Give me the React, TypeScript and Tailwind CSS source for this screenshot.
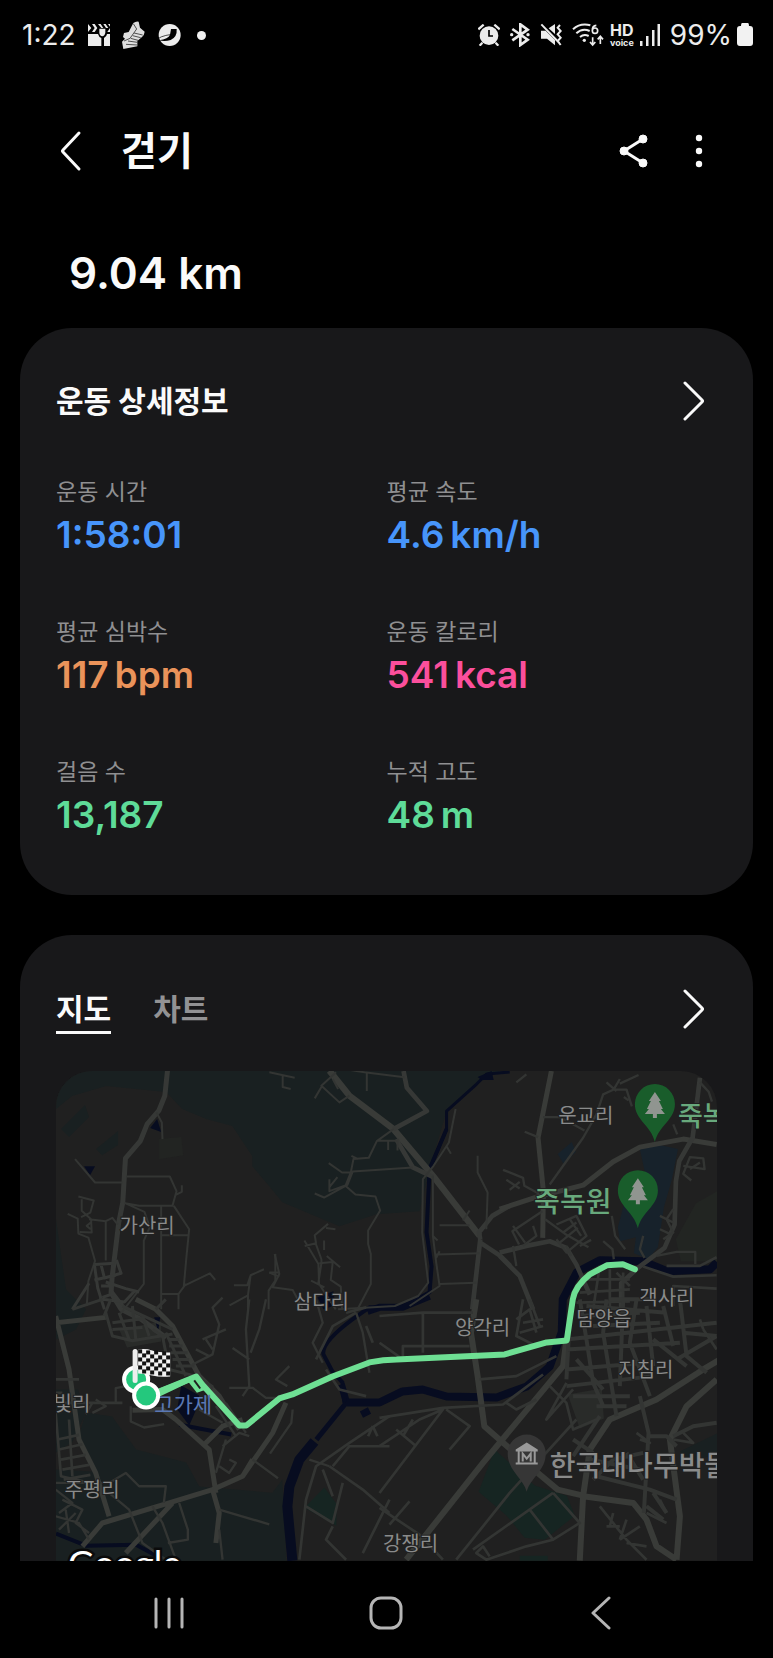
import type { ReactNode } from 'react';

interface Stat {
  label: string;
  value: string;
  unit?: string;
  color: string;
}

const STATS: Stat[] = [
  { label: '운동 시간', value: '1:58:01', color: 'text-[#4795fa]' },
  { label: '평균 속도', value: '4.6', unit: 'km/h', color: 'text-[#4795fa]' },
  { label: '평균 심박수', value: '117', unit: 'bpm', color: 'text-[#ea935a]' },
  { label: '운동 칼로리', value: '541', unit: 'kcal', color: 'text-[#fb4f9c]' },
  { label: '걸음 수', value: '13,187', color: 'text-[#5edb98]' },
  { label: '누적 고도', value: '48', unit: 'm', color: 'text-[#5edb98]' },
];

const PLACES = [
  { name: '가산리', x: 148, y: 1234 },
  { name: '삼다리', x: 322, y: 1310 },
  { name: '운교리', x: 586, y: 1124 },
  { name: '객사리', x: 667, y: 1306 },
  { name: '양각리', x: 483, y: 1336 },
  { name: '담양읍', x: 604, y: 1327 },
  { name: '지침리', x: 646, y: 1378 },
  { name: '빛리', x: 73, y: 1412 },
  { name: '주평리', x: 93, y: 1497 },
  { name: '강쟁리', x: 411, y: 1551 },
];

function ChevronRight() {
  return (
    <svg width="24" height="44" viewBox="0 0 24 44" fill="none" stroke="#fafafa" strokeWidth="3" strokeLinecap="round" strokeLinejoin="round" aria-hidden="true">
      <path d="M4 4 21 21q1 1 0 2L4 40" />
    </svg>
  );
}

function StatusBar() {
  return (
    <div className="flex h-[70px] items-center justify-between pr-5 pl-[22px] text-[28px] text-[#ececec]">
      <div className="flex items-center gap-3">
        <span>1:22</span>
        <svg width="22" height="22" viewBox="0 0 66 66" fill="#ececec" aria-hidden="true">
          <path d="M0 0 10 12 0 24ZM12 0h8l8 12-8 12H12l8-12ZM30 0h8l8 12H40ZM46 0h7l8 12H54ZM60 0h6v8ZM66 12v12h-8ZM0 30h30q3 10 10 12v24H0ZM66 30v36H48V42q8-4 9-12ZM34 14h18v12q-2 10-9 11-8-1-9-11Z" />
        </svg>
        <svg width="23" height="28" viewBox="360 62 69 84" aria-hidden="true">
          <path fill="#dedede" d="M394 68q8-6 16-4l4 18 14 12q-1 10-8 16l-14 12 0 16-42 8-4-22 9-9-6-5 3-12 14-3Z" />
          <path stroke="#333" strokeWidth="2.5" fill="none" d="m394 70 10 16-20 28-18 8M396 98l26 6M392 106l24 6M386 114l22 6M378 122l28 4M372 132l34 2" />
        </svg>
        <svg width="24" height="24" viewBox="460 68 72 72" aria-hidden="true">
          <circle cx="498" cy="104" r="33" fill="#ececec" />
          <path fill="#000" d="M502 86h17q2 24-18 33-18 6-35 1 28-4 33-17Z" />
          <path stroke="#000" strokeWidth="2" fill="none" d="M460 120q4-12 44-18" />
        </svg>
        <span className="ml-1 size-[9px] rounded-full bg-[#f2f2f2]" />
      </div>
      <div className="flex items-center gap-[10px]">
        <svg width="22" height="22" viewBox="53 72 66 66" fill="#ececec" aria-hidden="true">
          <circle cx="86" cy="107" r="28" />
          <path d="m54 88 16-14M118 88l-16-14M66 128l-8 9m48-9 8 9" stroke="#ececec" strokeWidth="7" />
          <path d="M86 90v18h12" stroke="#000" strokeWidth="5" fill="none" />
        </svg>
        <svg width="20" height="24" viewBox="149 70 60 72" fill="none" stroke="#ececec" strokeWidth="8" aria-hidden="true">
          <path d="m156 88 46 32-22 16V74l22 16-46 32" />
          <circle cx="154" cy="105" r="5" fill="#ececec" stroke="none" />
          <circle cx="203" cy="105" r="5" fill="#ececec" stroke="none" />
        </svg>
        <svg width="22" height="24" viewBox="240 70 66 72" aria-hidden="true">
          <path fill="#ececec" d="M243 93h14l28 28v16l-24-20h-18ZM266 86l19-13v30Z" />
          <path stroke="#ececec" strokeWidth="6" fill="none" d="m244 74 54 56m2-54-7 8 9 10-9 10 9 10-9 10 9 12" />
        </svg>
        <svg width="32" height="24" viewBox="336 70 96 72" fill="none" stroke="#ececec" strokeWidth="6" aria-hidden="true">
          <path d="M339 89q22-20 52-12M349 101q18-17 40-7M360 112q12-10 26-3" />
          <circle cx="373" cy="122" r="5" fill="#ececec" stroke="none" />
          <path d="M409 77q-13 1-12 16m0 0a8 8 0 1 0 16 0 8 8 0 1 0-16 0M398 113v22m-8-8 8 9 8-9M421 133v-22m-8 8 8-9 8 9" strokeWidth="5" />
        </svg>
        <span className="-mx-1 flex flex-col items-center pt-px font-bold">
          <span className="text-[16px] leading-[14px]">HD</span>
          <span className="text-[9px] leading-[12px]">voice</span>
        </span>
        <svg width="20" height="22" viewBox="0 0 20 22" fill="#ececec" aria-hidden="true">
          <path d="M0 17h2.5v5H0ZM6 12h2.5v10H6ZM12 6h2.5v16H12ZM17.5 0H20v22h-2.500Z" />
        </svg>
        <span className="flex items-center gap-[5px]">
          99%
          <svg width="16" height="24" viewBox="0 0 16 24" fill="#f2f2f2" aria-hidden="true">
            <path d="M5 0h6q1 0 1 3h1q3 0 3 3v14q0 3-3 3H3q-3 0-3-3V6q0-3 3-3h1q0-3 1-3Z" />
          </svg>
        </span>
      </div>
    </div>
  );
}

function ParkPin({ x, y }: { x: number; y: number }) {
  return (
    <g transform={`translate(${x} ${y})`}>
      <path d="M0 37C-4 20-20 15-20-1a20 20 0 0 1 40 0C20 15 4 20 0 37Z" fill="#195d2b" />
      <path d="M0-13 6-4H4l4 8H6l4 5H2v4h-4V9h-8l4-5h-2l4-8h-2Z" fill="#909590" />
    </g>
  );
}

function RouteMap() {
  const flag: ReactNode[] = [];
  for (let row = 0; row < 6; row++) {
    for (let col = 0; col < 8; col++) {
      if ((row + col) % 2 === 0) {
        flag.push(<rect key={`${row}-${col}`} x={139 + col * 4} y={1350 + row * 4 + Math.round(col / 3)} width="4" height="4" fill="#111" />);
      }
    }
  }

  return (
    <svg viewBox="57 1072 660 489" className="block h-auto w-full rounded-t-[36px]" role="img" aria-label="지도">
      <rect x="57" y="1072" width="660" height="489" fill="#202020" />

      {/* forest and parks */}
      <g fill="#192021">
        <path d="M57 1072H500L477 1085 447 1112 430 1170 420 1212 377 1215 340 1227 283 1203 270 1187 253 1167V1157L233 1127 207 1120 183 1110 167 1093 107 1087 73 1097 57 1110Z" />
        <path d="M62 1130l24-24 4 12-20 20ZM97 1150l22-18 0 14-16 10ZM57 1220l10 70 20 20-10 20-20 10Z" />
        <path d="M87 1413 113 1417 137 1450 187 1463 200 1487 273 1493 283 1480 287 1561H57V1470L93 1472 80 1435ZM57 1390h22l8 23-14 30-16 10Z" />
        <path d="M680 1452l37-18v20l-30 10Z" />
      </g>
      <path d="M676 1240l20-36 21-12v70h-36Z" fill="#222522" />
      <path d="M160 1140l22-2 2 18-24 4Z" fill="#222422" />
      <path d="M640 1150l20-4 18 4-6 30-8 28-6 40-10 12-14-6 2-16-16 4-2-14 8-30 20-20ZM558 1155l14-12 4 10-12 12Z" fill="#17222b" />
      <path d="M495 1450l40 36 32 10 8 20-30 24-20-2-18-22-28-24ZM305 1508l20-20 12 16v22ZM520 1556h28v5h-28Z" fill="#162522" />
      <path d="M568 1395l34-6 2 30-24 10ZM120 1330l42-8v20l-34 6Z" fill="#292b29" />

      {/* river */}
      <g fill="none" stroke="#070c20" strokeLinejoin="round">
        <path d="M510 1073 487 1075 477 1085 447 1112V1130L430 1170" strokeWidth="3" />
        <path d="M447 1130 430 1170 427 1233 432 1267 430 1293 403 1308H370L353 1320Q322 1343 324 1355L333 1372 343 1383 345 1403" strokeWidth="4" />
        <path d="M368 1312 380 1308H403L430 1297M342 1385 347 1403M362 1415l8-4" strokeWidth="7" />
        <path d="M717 1263 710 1270 667 1272 643 1262 600 1261 577 1273 563 1300 562 1333 550 1367 527 1387 497 1398 447 1397 423 1390 403 1392 380 1403 347 1403" strokeWidth="8" />
        <path d="M347 1403 317 1440" strokeWidth="5" />
        <path d="M315 1442 300 1460 290 1487 288 1507 293 1561" strokeWidth="10" />
        <path d="M57 1534l30 12 50-1 22 12M180 1425l20 4 32 6" strokeWidth="4" />
      </g>
      <path d="M151 1129l7-9 4 13ZM85 1167h11l-5 9ZM178 1410l4-24 18 10-3 14-7 16ZM318 1298l16-6 2 14-12 4ZM478 1078l14-6 2 9h-12ZM155 1318l4 14 2-14Z" fill="#070c20" />

      {/* northwest roads */}
      <g transform="translate(40 1060) scale(0.3333)" fill="none" stroke="#333533" strokeWidth="6" strokeLinejoin="round">
        <path d="m385 35-8 75-18 45-35 40-20 50-45 53-8 132-12 60-20 165-3 45 30 50 60 30 75 55" strokeWidth="15" stroke="#363836" />
        <path d="m352 160 16 30 2 50M108 300l60 70h82M262 352h130l20 44-12 44H300l-42-8 58 26 16 46-18 40v130l-70 90M404 440l46 70-8 80-8 90 78-38 16 20M450 528H366M366 440v310M366 704h52v46M418 704l22-30M428 378v20l-20 10" />
        <path d="m86 464 30 14 2 45 30 12 20 70-20 60-5 75M118 412l46 12-10 36-28 14M128 420v35l28 25 2 40-36-2M150 480l50 6 20-10 16 20M200 484v120M155 490l-12 10 12 10" />
        <path d="m166 616 60-4m-60 4 10 70 20 64m-10-134 10 40 50-14-14-40m-66 60 64-14m-50 70 76 10 30-32M150 672l-50 78m86-70 28 0 6 24-30 10m30-16 40 52m-60-82 60 20 40 10" strokeWidth="9" stroke="#363836" />
        <path d="M584 678h40l10-30 40-18M634 648l-8 60-55 30m55-30v42M708 584v80l-20 30v56M690 640l30 12" />
      </g>

      {/* north centre roads */}
      <g transform="translate(270 1060) scale(0.3333)" fill="none" stroke="#333533" strokeWidth="6" strokeLinejoin="round">
        <path d="m180 35 60 75 130 98 120 142 140 180" strokeWidth="19" stroke="#393b38" />
        <path d="m380 240 50 85 60 28M372 210l100-54-60-70-10-50M632 540l-24 210M632 540l-4-20 40-50 52-30M632 550l60 40 30 30" strokeWidth="14" stroke="#363836" />
        <path d="m405 55-120-15-60-10M292 38v58M200 40l-44 40 54 50 30-20M156 84l-20 34M0 40l76 16M40 50v34l24 6M190 60l16 30M372 210l-50 36-24 50-46 4-8 40-16 40 30 26 60 6 14 42-36 60v40l8 30v90l-42 80M430 325l-180 12-16 40-70 38-28-12M178 312l40 28h26M180 360v36l50-18M180 384l24-30M325 245l58 0M356 245v28M384 240v34M246 290l20 10" />
        <path d="m558 150-20 100-46 70-32 40-2 160 18 150-30 40-70 30-170 10M490 350v180l10 80 10 70-90 60M510 498h90M500 586l130-4M510 674l110-4M624 290v50l30 60-4 110M530 260l14 24M600 454l-20 30M490 530l14 14M510 576l-10 20" />
        <path d="M176 494l-40 34 4 24-34 8M170 506l28 4M105 544l42 70 2 60 50 76M138 550l18 50v12l-10 64M164 544v28M150 612l40-4-6 54 30 20 4 68M172 590l40 34M16 584l14 60-20 40 60 8 30 56M0 640h28M125 664l40 20" />
      </g>

      {/* northeast roads */}
      <g transform="translate(500 1060) scale(0.3333)" fill="none" stroke="#333533" strokeWidth="7" strokeLinejoin="round">
        <path d="m155 36-40 200 16 160-2 140M0 450l110-36 140-36 90-70 80-44 130-24 100 16" strokeWidth="15" stroke="#393b38" />
        <path d="M600 56l-22 180-40 70-10 60-4 130-30 70-80 60-50 46v78M0 580l80-20 70-14 50 20 30 50 40 90M0 590l60 60 40 100" strokeWidth="14" stroke="#363836" />
        <path d="m50 70 30-24M150 376l100-140 40-70 20-60 30-14 40 0 16 50M340 94l20-34M360 74l56-26M320 70l30 26M386 124l-14-10M130 174h50l74 40M75 218l40 16M520 196l12 30M600 70l26 28 10 30M10 332l60 24 4 24 44 24M20 362l40 26M30 392l30-24M128 456l-90 60 20 40M40 500l36 50M50 620l-10-60M136 480l60 44 70 40M170 496l60-26 30 60-60 50-30-40M190 520l40-30M210 480l34 50M180 550l54-44M200 560l14 30M240 560l34-18M310 546l28 24 4 30M336 470l10 60 30 40M430 530l-10 40 14 26M470 590l60-12h56v36M550 320l64 10-4-32-40-4-20 50 24 20M570 330l30-20M490 540l30-20-20-40 20-30M480 470l40 20M480 510l30 14M100 500l10 30-40 30" />
        <path d="M430 622l90 30 130-4M500 620h100l50-26M520 740l0-60 130 8M250 660l140 0M300 620l-20 130M330 630v120M370 640v110M240 700l150-10M230 730l160-4M350 640l40 40" strokeWidth="8" />
      </g>

      {/* southwest roads */}
      <g transform="translate(40 1300) scale(0.3333)" fill="none" stroke="#333533" strokeWidth="7" strokeLinejoin="round">
        <path d="M290 0l60 30 50 50 80 150 60 60 60 100M50 50l40 160 30 210 50 100 40 130M50 70l150-16M740 310l-40 90-90 130-90 40-130 40-200 60-60 70M520 570l20 70-10 90M640 480l-30 50M530 580l-20-130-100-90-40-30-90 2M400 610l-140 150M490 440l60-60 60-20" strokeWidth="15" stroke="#393b38" />
        <path d="M200 40l20 70 60 14 120-20M240 40l30 80M280 20l10 100M220 70l90-12M220 90l90-6M310 50l20 60M340 90l30 20 20 100 80 20M380 100l60 130M390 120l30 0M390 140l40 0M395 160l50 0M400 180l50 0M410 200l56 0M250 20l150 70M215 0l-20 50M100 30l90-30M350 30l30-30" strokeWidth="9" />
        <path d="M50 240l70 0M50 280l20 0M60 310h190M50 340l16 190 90 20M90 360l10 170M56 420l64-14M60 450l70-16M66 480l74-14M70 510l80-14M74 540l80-14" strokeWidth="8" />
        <path d="M230 310v-44l50-10M275 320v46l40 18 60-10M170 300l30 20-40 20M160 310l-20 34M460 195l60-30 20-90-20-50 30-30M490 120l70-30M470 150l40 20M520 150l-20-30M630 0l-10 90 10 170-20 30M680 0l-20 90-26 70M580 146l50 34M570 265l70 0 40 30 50 0M750 200l-40 40 34 20M830 0l20 70-30 60 30 60M950 40l20 60 20 120M760 330l-4 40-64 92M640 480l76 56M540 630l150 44M870 500l-60-20M540 690l10 90M550 440l50-40 30 10M560 420l-30 100M540 500l30 20 20-30-20-10M470 230l50 30-20 40M480 330l70 40M530 320l60 90M560 310l60 90" />
        <path d="M50 550h160l50-30 40 40 80 0-6 50M50 570l50 40-40 30M70 600l60 30-20 40 40 30M50 650l70 20 30 50M60 690l50-50M80 630l10 70M210 580l60 50 40 100 70 50M340 620l30 50 40 110M420 610l26 80v30l-60 10" />
        <path d="M1050 350l-120 80-100 70-30 100-20 180M870 500l100 70 80 70M850 510l30 80M1050 440h-120l-50 60M800 620l80 50 30-120M880 680l-20 40 60 60M1050 600l-80 160M950 40l-70 40-50 100M980 80l20 50M1000 380l-14 30M1000 380l14 30M860 210l40 60 80 20M920 40l60-16" strokeWidth="8" />
      </g>

      {/* southeast roads */}
      <g transform="translate(380 1300) scale(0.3333)" fill="none" stroke="#333533" strokeWidth="8" strokeLinejoin="round">
        <path d="M290 0l-16 100 20 130 20 150 160 140 60 50 76 18-10 195M80 780l230-290 240-290 10-80M610 590l150 20 40 50 30 80 60 40M610 590l20-140 60-90 140-60 140-90 50-30M1010 240l-90 80-50 100 30 230-10 130" strokeWidth="18" stroke="#393b38" />
        <path d="M600 0l20 120 20 130 30 70M680 0l-10 100 40 250M770 0l-20 130 60 160M560 120l450-50M560 150l340-20M560 210l240-20M560 260l260-30M580 290l170 0M900 0l20 170 60 50M890 180l120-70M910 100l100 10M820 120l100 80M690 0l140 0M600 50l180-10M640 80l200-10M620 20l240 20M730 0l-10 260M800 20l20 180M850 20l30 120M570 60l-10 180M590 180l80 90M650 320l90 0M660 350l-80 120M780 290l26 110-14 240M800 410h60l30 30M880 410l60-30 70-10M640 540l60-60 90-20M650 530l160 40 80 30M580 420l60 40M630 480l150 30M790 540l-50-80M820 580l40 60M800 620l50 40" strokeWidth="12" />
        <path d="M430 0l-20 110 60 30M410 60l40-30 20 70M450 0l30 80M430 70l60-10M420 100l70-20M0 130l70 50v-40h200M0 50l130-10v120M300 240l110-10 120-60M130 40h150M0 355l190-30 180-10 120-90M0 440l120-80 70-30-190 250M200 330l70 50-60 70M50 390l60 50M70 410l30-50M380 310l30 20 60-30M560 250l-60 110 80-90M510 260l50 50 20 80 70-30M590 360l-200 220-160 200M520 580l-240 170M450 630l70 90-80 20-120 40-30-20 20-20 20 30M520 580l80 90-80 50M0 625l120 80 70 75M90 605l-60 70M1010 150l-40-60M960 60l10 30M880 420l60 10-30-30M770 400l40 30-30-10M660 620l80 100 60 60M700 640l-10 40M740 660l-20 60M680 680l40 0M720 720l60-40M740 730l60 10M840 600l20 40M800 640l60 30" />
      </g>

      {/* walked route */}
      <path d="M635 1270 623 1265 607 1266 590 1275Q575 1287 573 1300L567 1341 547 1343 505 1355 397 1360Q384 1360 370 1363L333 1377 293 1395 280 1399 247 1426H240L203 1385 197 1377 160 1392" fill="none" stroke="#6edf93" strokeWidth="6" strokeLinejoin="round" strokeLinecap="round" />
      <path d="M158 1397 190 1382 198 1392 204 1390 194 1377 158 1391Z" fill="#6edf93" stroke="#6edf93" strokeWidth="2" />
      <path d="M195 1381l6 8" stroke="#202020" strokeWidth="2" />

      <g fontFamily="'Noto Sans CJK KR', sans-serif" fill="#8a8b8b" stroke="#202020" strokeWidth="2" paintOrder="stroke">
        {PLACES.map(p => (
          <text key={p.name} x={p.x} y={p.y} fontSize="20" textAnchor="middle">{p.name}</text>
        ))}
        <text x="184" y="1413" fontSize="21" textAnchor="middle" fill="#5a78b5" stroke="none">고가제</text>
        <text x="550" y="1476" fontSize="28" fontWeight="500">한국대나무박물관</text>
        <g fill="#68a97c" fontWeight="500">
          <text x="573" y="1213" fontSize="28" textAnchor="middle">죽녹원</text>
          <text x="678" y="1127" fontSize="27">죽녹원</text>
        </g>
      </g>
      <ParkPin x={655} y={1106} />
      <ParkPin x={638} y={1192} />

      <path d="M527 1492C523 1478 508 1471 508 1454a19 19 0 0 1 38 0C546 1471 531 1478 527 1492Z" fill="#363636" />
      <path d="M527 1443l11 7v2h-22v-2ZM518 1452h2v11h-2ZM534 1452h2v11h-2ZM516 1463h22v2h-22Z" fill="#999" />
      <path d="M523 1462v-8l4 5 4-5v8" fill="none" stroke="#999" strokeWidth="2" />

      {/* start marker, finish marker and flag */}
      <circle cx="137" cy="1380" r="12" fill="#24c87d" stroke="#fff" strokeWidth="4" />
      <path d="M139 1350q8-1 14 1t18 2v24q-10 1-18-1t-14-2Z" fill="#f3f3f3" />
      {flag}
      <path d="M136 1352v29" stroke="#eee" strokeWidth="5" strokeLinecap="round" />
      <circle cx="147" cy="1396" r="12" fill="#24c87d" stroke="#fff" strokeWidth="4" />

      <text x="69" y="1577" fontFamily="Lato, sans-serif" fontSize="36" fill="#fff" stroke="#0b0b0b" strokeWidth="5" paintOrder="stroke">Google</text>
    </svg>
  );
}

export default function App() {
  return (
    <div className="flex min-h-screen flex-col bg-black font-['Inter','Noto_Sans_CJK_KR',sans-serif] text-[#fafafa]">
      <StatusBar />

      <header className="flex h-40 items-center px-[58px] pt-px">
        <button aria-label="뒤로" className="mr-[39px]">
          <svg width="24" height="44" viewBox="0 0 24 44" fill="none" stroke="#fafafa" strokeWidth="3" strokeLinecap="round" strokeLinejoin="round">
            <path d="M21 4 5 21q-1 1 0 2l16 17" />
          </svg>
        </button>
        <h1 className="flex-1 pt-0.5 text-[39px] font-bold">걷기</h1>
        <button aria-label="공유" className="mr-[45px]">
          <svg width="32" height="36" viewBox="0 0 32 36" fill="#fafafa" stroke="#fafafa">
            <path d="M25 6 6 18l19 12" fill="none" strokeWidth="3" />
            <circle cx="25" cy="6" r="4" />
            <circle cx="6" cy="18" r="4" />
            <circle cx="25" cy="30" r="4" />
          </svg>
        </button>
        <button aria-label="더보기" className="mr-3">
          <svg width="8" height="36" viewBox="0 0 8 36" fill="#fafafa">
            <circle cx="4" cy="5" r="3.2" />
            <circle cx="4" cy="18" r="3.2" />
            <circle cx="4" cy="31" r="3.2" />
          </svg>
        </button>
      </header>

      <p className="px-[69px] pt-[10px] pb-[22px] text-[44px] leading-[66px] font-semibold">9.04 km</p>

      <main className="flex flex-1 flex-col gap-10 px-5">
        <section className="rounded-[52px] bg-[#18181a] px-9 pt-[50px] pb-[54px]">
          <div className="flex items-center justify-between">
            <h2 className="text-[30px] leading-[46px] font-bold">운동 상세정보</h2>
            <button aria-label="운동 상세정보 보기" className="mr-3">
              <ChevronRight />
            </button>
          </div>
          <dl className="mt-[51px] grid grid-cols-2 gap-y-[54px]">
            {STATS.map(s => (
              <div key={s.label}>
                <dt className="text-[23px] leading-[34px] text-[#8f8f91]">{s.label}</dt>
                <dd className={`flex gap-[6px] text-[37px] leading-[52px] font-semibold ${s.color}`}>
                  <span>{s.value}</span>
                  {s.unit && <span>{s.unit}</span>}
                </dd>
              </div>
            ))}
          </dl>
        </section>

        <section className="flex-1 rounded-t-[52px] bg-[#18181a] px-9 pt-12">
          <div className="flex items-center justify-between">
            <div role="tablist" className="flex gap-[42px] pt-1 text-[30px] leading-[44px] font-bold">
              <button role="tab" aria-selected="true" className="border-b-3 border-[#fafafa]">지도</button>
              <button role="tab" aria-selected="false" className="border-b-3 border-transparent text-[#929294]">차트</button>
            </div>
            <button aria-label="지도 보기" className="mr-3">
              <ChevronRight />
            </button>
          </div>
          <div className="mt-[37px]">
            <RouteMap />
          </div>
        </section>
      </main>

      <nav className="flex h-[97px] items-center justify-between pt-[6px] pr-[156px] pl-[150px]">
        <button aria-label="최근 앱">
          <svg width="38" height="34" viewBox="0 0 38 34" stroke="#b5b5b5" strokeWidth="3" strokeLinecap="round">
            <path d="M6 3v28M19 3v28M32 3v28" />
          </svg>
        </button>
        <button aria-label="홈">
          <svg width="34" height="34" viewBox="0 0 34 34" fill="none" stroke="#b5b5b5" strokeWidth="3">
            <rect x="2" y="2" width="30" height="30" rx="10" />
          </svg>
        </button>
        <button aria-label="뒤로 가기">
          <svg width="34" height="34" viewBox="0 0 34 34" fill="none" stroke="#b5b5b5" strokeWidth="3" strokeLinecap="round" strokeLinejoin="round">
            <path d="M26 2 10 17l16 15" />
          </svg>
        </button>
      </nav>
    </div>
  );
}
